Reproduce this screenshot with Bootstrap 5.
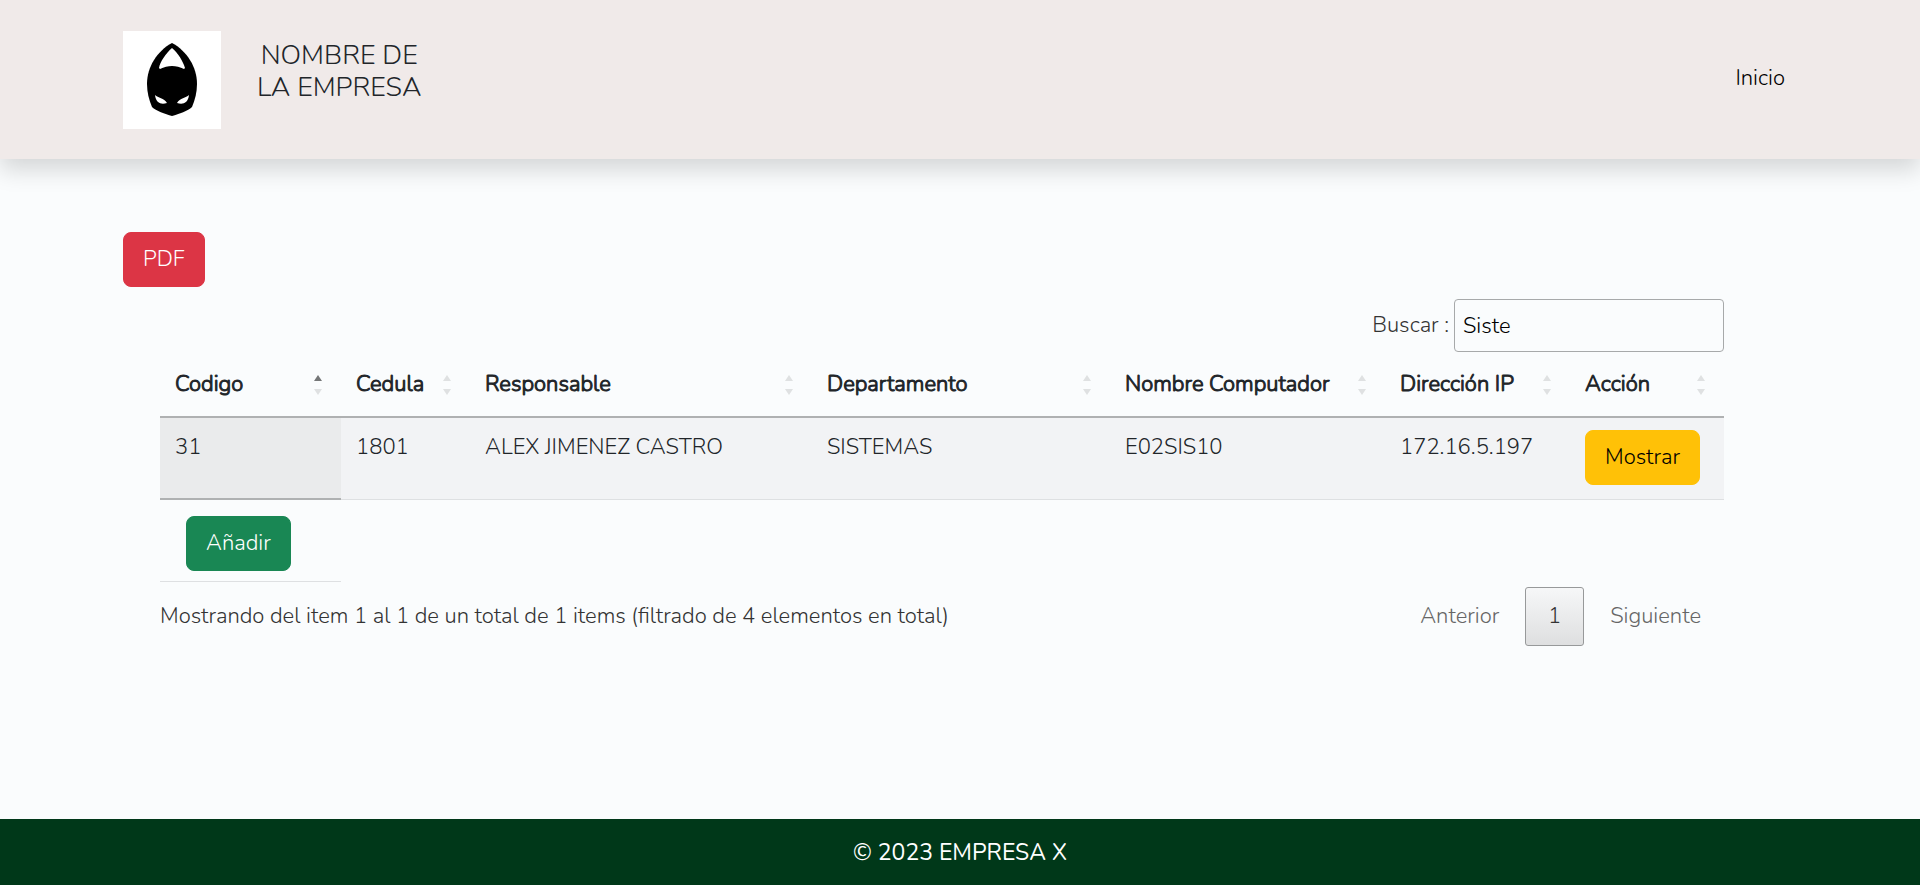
<!DOCTYPE html>
<html lang="es">
<head>
<meta charset="utf-8">
<meta name="viewport" content="width=device-width, initial-scale=1">
<title>Inventario - Nombre de la empresa</title>
<link href="https://cdn.jsdelivr.net/npm/bootstrap@5.3.0/dist/css/bootstrap.min.css" rel="stylesheet">
<style>
  body {
    font-family: "Nunito", "Lato", sans-serif;
    font-size: 22px;
    font-weight: 300;
    line-height: 33px;
    background-color: #fafcfd;
    color: #212529;
  }
  .site-header {
    background-color: #f0eae9;
    min-height: 159px;
    padding: 31px 123px 30px;
    box-shadow: 0 11px 22px rgba(0, 0, 0, .15);
  }
  .site-logo { width: 98px; height: 98px; }
  .site-name { font-size: 27px; font-weight: 300; line-height: 32px; margin: 9px 0 0 36px; }
  .site-link { color: #000; padding: 0 12px; margin-top: 31px; }
  .site-main { padding: 73px 196px 24px 123px; }
  .listing { margin: 12px 0 0 37px; }
  .btn { --bs-btn-font-size: 22px; --bs-btn-line-height: 33px; --bs-btn-font-weight: 300;
         --bs-btn-padding-x: 19px; --bs-btn-padding-y: 10px; --bs-btn-border-radius: 8px; }
  .search-box {
    width: 270px; height: 53px; margin-left: 5px; padding: 0 8px;
    border: 1px solid #a7a9aa; border-radius: 4px; background: transparent; color: #000; font-weight: 300;
  }
  .soft { color: #333; }
  .inventory { table-layout: fixed; border-collapse: separate; border-spacing: 0; width: 100%; margin: 0; }
  .inventory th, .inventory td { padding: 13px 15px 12px; vertical-align: top; }
  .inventory thead th { font-weight: 300; -webkit-text-stroke: 1px; padding-top: 16px; padding-bottom: 15px; white-space: nowrap; border-bottom: 2px solid #afb1b2; }
  .inventory tbody td { background-color: #f2f3f5; border-bottom: 1px solid #dee0e2; height: 82px; }
  .inventory tbody td:last-child { padding-top: 12px; }
  .inventory tbody td.sorted { background-color: #eaebec; border-bottom: 2px solid #afb1b2; }
  .inventory tfoot td:first-child { padding: 16px 26px 10px; border-bottom: 1px solid #dee0e2; }
  .sort-mark { width: 8px; height: 20px; margin-right: 4px; flex: none; fill: #dfe1e2; }
  .sort-mark .active-dir { fill: #747677; }
  .list-status { margin-top: 5px; }
  .pager-item { border: 1px solid transparent; border-radius: 3px; background: none; color: #666; font-weight: 300; height: 59px; padding: 0 22px; }
  .pager-item.current { border-color: #97999a; color: #333; background: linear-gradient(#f6f7f8, #dedfe0); width: 59px; padding: 0; margin: 0 3px; }
  .site-footer { background-color: #003819; color: #fff; font-size: 23px; font-weight: 400; height: 66px; }
</style>
</head>
<body class="d-flex flex-column min-vh-100">
<header class="site-header d-flex justify-content-between align-items-start">
  <div class="d-flex align-items-start">
    <svg class="site-logo" viewBox="0 0 98 98" role="img" aria-label="Logo">
      <rect width="98" height="98" fill="#fff"/>
      <path d="M49 12C34 20 24 36 24 53C24 61 26 69 29 76C33 80 42 83 49 85C56 83 65 80 69 76C72 69 74 61 74 53C74 36 64 20 49 12Z"/>
      <path fill="#fff" d="M49 17C43 22 37 31 36 37L37 38C45 34 53 34 61 38L62 37C60 30 55 22 49 17ZM32 64C35 67 41 67 44 72C38 74 33 72 32 64ZM66 64C63 67 57 67 54 72C60 74 65 72 66 64Z"/>
    </svg>
    <h1 class="site-name text-center">NOMBRE DE<br>LA EMPRESA</h1>
  </div>
  <nav class="site-link"><a href="#" class="text-reset text-decoration-none">Inicio</a></nav>
</header>

<main class="site-main">
  <button type="button" class="btn btn-danger">PDF</button>
  <section class="listing">
    <div class="d-flex justify-content-end align-items-center">
      <label for="buscar" class="soft">Buscar :</label>
      <input id="buscar" type="search" class="search-box" value="Siste">
    </div>
    <table class="inventory">
      <colgroup>
        <col style="width:181px"><col style="width:129px"><col style="width:342px"><col style="width:298px"><col style="width:275px"><col style="width:185px"><col style="width:154px">
      </colgroup>
      <thead>
        <tr>
          <th scope="col"><div class="d-flex align-items-center justify-content-between">Codigo <svg class="sort-mark" viewBox="0 0 8 20"><path class="active-dir" d="M0 6L4 0L8 6Z"/><path d="M0 14L4 20L8 14Z"/></svg></div></th>
          <th scope="col"><div class="d-flex align-items-center justify-content-between">Cedula <svg class="sort-mark" viewBox="0 0 8 20"><path d="M0 6L4 0L8 6ZM0 14L4 20L8 14Z"/></svg></div></th>
          <th scope="col"><div class="d-flex align-items-center justify-content-between">Responsable <svg class="sort-mark" viewBox="0 0 8 20"><path d="M0 6L4 0L8 6ZM0 14L4 20L8 14Z"/></svg></div></th>
          <th scope="col"><div class="d-flex align-items-center justify-content-between">Departamento <svg class="sort-mark" viewBox="0 0 8 20"><path d="M0 6L4 0L8 6ZM0 14L4 20L8 14Z"/></svg></div></th>
          <th scope="col"><div class="d-flex align-items-center justify-content-between">Nombre Computador <svg class="sort-mark" viewBox="0 0 8 20"><path d="M0 6L4 0L8 6ZM0 14L4 20L8 14Z"/></svg></div></th>
          <th scope="col"><div class="d-flex align-items-center justify-content-between">Dirección IP <svg class="sort-mark" viewBox="0 0 8 20"><path d="M0 6L4 0L8 6ZM0 14L4 20L8 14Z"/></svg></div></th>
          <th scope="col"><div class="d-flex align-items-center justify-content-between">Acción <svg class="sort-mark" viewBox="0 0 8 20"><path d="M0 6L4 0L8 6ZM0 14L4 20L8 14Z"/></svg></div></th>
        </tr>
      </thead>
      <tbody>
        <tr>
          <td class="sorted">31</td>
          <td>1801</td>
          <td>ALEX JIMENEZ CASTRO</td>
          <td>SISTEMAS</td>
          <td>E02SIS10</td>
          <td>172.16.5.197</td>
          <td><button type="button" class="btn btn-warning">Mostrar</button></td>
        </tr>
      </tbody>
      <tfoot>
        <tr><td><button type="button" class="btn btn-success">Añadir</button></td><td colspan="6"></td></tr>
      </tfoot>
    </table>
    <div class="list-status d-flex justify-content-between align-items-center">
      <div class="soft">Mostrando del item 1 al 1 de un total de 1 items (filtrado de 4 elementos en total)</div>
      <nav class="d-flex" aria-label="Paginación">
        <button type="button" class="pager-item">Anterior</button>
        <button type="button" class="pager-item current" aria-current="page">1</button>
        <button type="button" class="pager-item">Siguiente</button>
      </nav>
    </div>
  </section>
</main>

<footer class="site-footer mt-auto d-flex align-items-center justify-content-center">© 2023 EMPRESA X</footer>
<script src="https://cdn.jsdelivr.net/npm/bootstrap@5.3.0/dist/js/bootstrap.bundle.min.js"></script>
</body>
</html>
